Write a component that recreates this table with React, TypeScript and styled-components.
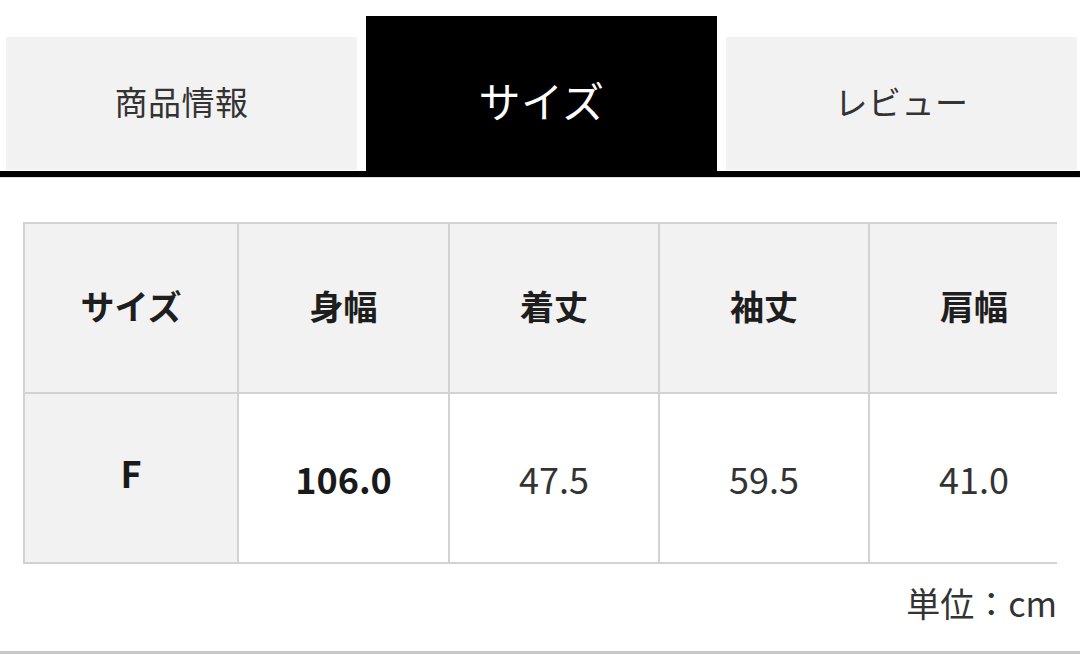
import styled, { createGlobalStyle } from 'styled-components';

const GlobalStyle = createGlobalStyle`
  html, body {
    margin: 0;
    padding: 0;
    background: #fff;
  }
  body {
    font-family: 'Noto Sans CJK JP', 'Noto Sans', sans-serif;
    color: #222;
  }
`;

const tabs = ['商品情報', 'サイズ', 'レビュー'];
const activeTab = 1;

const headers = ['サイズ', '身幅', '着丈', '袖丈', '肩幅'];
const values = ['F', '106.0', '47.5', '59.5', '41.0'];
const widths = [214, 211, 210, 210, 210];

const App = () => {
  return (
    <>
      <GlobalStyle />
      <Page>
        <TabBar>
          {tabs.map((tab, i) => (
            <Tab key={tab} $active={i === activeTab}>
              {tab}
            </Tab>
          ))}
        </TabBar>

        <TableArea>
          <TableClip>
            <SizeTable style={{ gridTemplateColumns: widths.map((w) => w + 'px').join(' ') }}>
              {headers.map((h) => (
                <HeadCell key={h}>{h}</HeadCell>
              ))}
              {values.map((v, i) => (
                <BodyCell key={i} $first={i === 0} $weight={i < 2 ? 700 : 400}>
                  {v}
                </BodyCell>
              ))}
            </SizeTable>
          </TableClip>
          <Unit>単位：cm</Unit>
        </TableArea>
      </Page>
    </>
  );
};

export default App;

const Page = styled.div`
  width: 1080px;
  height: 654px;
  overflow: hidden;
  box-sizing: border-box;
  border-bottom: 3px solid #c8c8c8;
`;

const TabBar = styled.div`
  display: flex;
  align-items: flex-end;
  gap: 9px;
  padding: 16px 0 0 6px;
  height: 177px;
  box-sizing: border-box;
  border-bottom: 6px solid #000;
  box-shadow: 0 1px 0 #ddd;
`;

const Tab = styled.div<{ $active?: boolean }>`
  flex: 0 0 351px;
  display: flex;
  align-items: center;
  justify-content: center;
  height: ${({ $active }) => ($active ? '155px' : '133px')};
  margin-bottom: ${({ $active }) => ($active ? '0' : '1px')};
  background: ${({ $active }) => ($active ? '#000' : '#f2f2f2')};
  color: ${({ $active }) => ($active ? '#fff' : '#333')};
  font-size: ${({ $active }) => ($active ? '42px' : '33px')};
  padding: ${({ $active }) => ($active ? '12px 0 0 0' : '0 0 6px 0')};
  box-sizing: border-box;
  letter-spacing: 0.5px;
`;

const TableArea = styled.div`
  padding: 45px 23px 0 23px;
  display: flex;
  flex-direction: column;
`;

const TableClip = styled.div`
  width: 1034px;
  overflow: hidden;
`;

const SizeTable = styled.div`
  display: grid;
  grid-template-rows: 170px 170px;
  width: max-content;
  border-top: 2px solid #d2d2d2;
  border-left: 2px solid #d2d2d2;
`;

const Cell = styled.div`
  display: flex;
  align-items: center;
  justify-content: center;
  box-sizing: border-box;
  border-right: 2px solid #d2d2d2;
  border-bottom: 2px solid #d2d2d2;
`;

const HeadCell = styled(Cell)`
  background: #f2f2f2;
  font-size: 34px;
  font-weight: 700;
  color: #1e1e1e;
  padding-bottom: 6px;
`;

const BodyCell = styled(Cell)<{ $first?: boolean; $weight: number }>`
  background: ${({ $first }) => ($first ? '#f2f2f2' : '#fff')};
  font-size: 36px;
  font-weight: ${({ $weight }) => $weight};
  color: ${({ $weight }) => ($weight > 400 ? '#1a1a1a' : '#333')};
  padding-bottom: ${({ $first }) => ($first ? '12px' : '0')};
`;

const Unit = styled.div`
  align-self: flex-end;
  margin-top: 16px;
  font-size: 34px;
  line-height: 46px;
  color: #333;
`;
